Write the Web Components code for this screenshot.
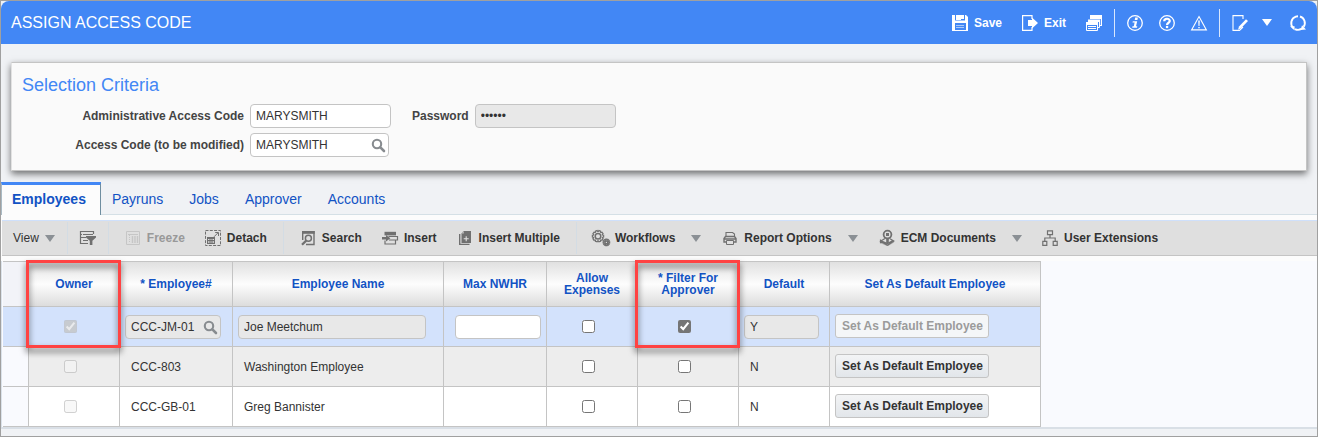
<!DOCTYPE html>
<html lang="en">
<head>
<meta charset="utf-8">
<title>Assign Access Code</title>
<style>
  html, body { margin: 0; }
  body { font: 12px/16px "Liberation Sans", Arial, sans-serif; color: #333; background: #f0f2f5; }
</style>
</head>
<body>
<app-window>
  <app-header slot="header" heading="ASSIGN ACCESS CODE"></app-header>
  <criteria-panel heading="Selection Criteria"></criteria-panel>
  <tab-bar tabs="Employees,Payruns,Jobs,Approver,Accounts"></tab-bar>
  <grid-toolbar></grid-toolbar>
  <employee-grid></employee-grid>
</app-window>

<script>
const define = (name, html, setup) => {
  const template = document.createElement('template');
  customElements.define(name, class extends HTMLElement {
    connectedCallback() {
      if (this.shadowRoot) return;
      const root = this.attachShadow({ mode: 'open' });
      template.innerHTML = `<style>*{box-sizing:border-box}[hidden]{display:none}</style>` +
        (typeof html === 'function' ? html(this) : html);
      root.append(template.content.cloneNode(true));
      if (setup) setup(root, this);
    }
  });
};

/* ---------- icons (16 unit grid) ---------- */
const S = 'fill="none" stroke="currentColor"';
const F = 'fill="currentColor"';
const gear = (cx, cy, r, teeth, inner) => {
  let d = '';
  for (let i = 0; i < teeth; i++) {
    const a = i * 2 * Math.PI / teeth, w = Math.PI / teeth / 2;
    const p = (rad, ang) => `${(cx + rad * Math.cos(ang)).toFixed(2)} ${(cy + rad * Math.sin(ang)).toFixed(2)}`;
    d += `${i ? 'L' : 'M'}${p(r - 1, a - w * 1.6)}L${p(r, a - w)}L${p(r, a + w)}L${p(r - 1, a + w * 1.6)}`;
  }
  return `<path d="${d}Z" ${S} stroke-width="1.2"/><circle cx="${cx}" cy="${cy}" r="${inner}" ${S} stroke-width="1.5"/>`;
};
const icons = {
  save: `<path ${F} fill-rule="evenodd" d="M0 0H14L16 2V16H0ZM3 0V5.4H13V0H12V4H9V0ZM3 8V15H14V8Z"/><path ${F} d="M4 0H9V5H4ZM10 1H12V4H10Z"/><path stroke="currentColor" d="M4 10.5H12M4 12.5H12" opacity=".55"/>`,
  exit: `<path ${S} stroke-width="1.2" d="M10 4V.6H.6V15.4H10V12"/><path ${F} d="M6 5H10V2.4L16 8L10 13.6V11H6Z"/>`,
  windows: `<path ${F} d="M4 0H16V4H4ZM14.8 3H16V11H13V10H14.8ZM2 4.6H14V7H2ZM0 7H12V10H0Z"/><path ${S} d="M.5 8V15.5H11.5V8M2 11.5H10M2 13.5H10"/><path ${S} d="M13.5 5V12.5H12"/>`,
  info: `<circle cx="8" cy="8" r="7.3" ${S} stroke-width="1.3"/><path ${F} d="M8.2 2.6H10.9L10.4 5H7.7ZM5.8 6.2H10.2L9 11.2H10.3L10 12.8H5.2L5.5 11.2H6.8L7.6 7.6H5.5Z"/>`,
  help: `<circle cx="8" cy="8" r="7.3" ${S} stroke-width="1.3"/><path ${S} stroke-width="2.2" d="M5.2 6.3C5.2 3 10.8 2.9 10.8 6C10.8 7.8 8 7.7 8 10"/><path ${F} d="M6.9 10.9H9.2V13.1H6.9Z"/>`,
  warn: `<path ${S} stroke-width="1.1" d="M8 1.6L15.4 14.9H.6Z"/><path ${F} d="M7.2 5.5H8.8L8.5 11H7.5ZM7.3 12H8.7V13.3H7.3Z"/>`,
  edit: `<path ${S} stroke-width="1.1" d="M11 4V.6H1V15.4H7.5L11 12"/><path ${F} d="M14 4.2L16 5.9L9 13.2L6 14.8L7 11.6Z"/>`,
  refresh: `<path ${S} stroke-width="1.9" d="M3.2 12.8A6.8 6.8 0 0 1 5.8 1.6A6.8 6.8 0 0 1 8 1.2M10 1.5A6.8 6.8 0 0 1 13.6 11.9M11.4 13.9A6.8 6.8 0 0 1 5 14.1"/><path ${F} d="M0 11.2H4.6V15.4ZM16 14.4L10.6 14.9L12 10.2Z"/>`,
  search: `<circle cx="6" cy="6" r="4.2" ${S} stroke-width="2.1"/><path stroke="currentColor" stroke-width="2.6" stroke-linecap="round" d="M9.6 9.6L13 13"/>`,
  filter: `<path ${S} stroke-width="1.2" d="M.5 1.5H13.5V4M.5 1V13.5H8M3 4.5H13M.5 7.5H6M3 10.5H8M0 4.5H2"/><path ${F} d="M6 6H16V7.5L12.4 10.8V15H9.8V10.8L6 7.5Z"/>`,
  freeze: `<path ${S} d="M1.5 1.5H14.5V14.5H1.5ZM3 4.5H13"/><path ${S} stroke-width="1.4" d="M7.5 6V13M10 6V13M12.5 6V13"/><path ${S} stroke-dasharray="1 1" d="M4.5 5V13"/>`,
  detach: `<path ${S} stroke-dasharray="3 1.3" d="M.5 .5H15.5V15.5H.5Z"/><path ${F} fill-rule="evenodd" d="M2 7H10V14H2ZM3 9V10H4.5V9ZM5.5 9V10H6.5V9ZM7.5 9V10H9V9ZM3 11.3V12.8H4.5V11.3ZM5.5 11.3V12.8H6.5V11.3ZM7.5 11.3V12.8H9V11.3Z"/><path ${S} d="M9 6.8L13 2.8M10.2 2.5H13.5V6"/>`,
  find: `<path ${S} stroke-width="1.4" d="M2.7 10V1.7H14V14.5H6"/><path ${F} d="M2 1H14.7V3.8H2Z"/><circle cx="8.4" cy="8.2" r="3" ${S} stroke-width="1.5"/><path stroke="currentColor" stroke-width="2.2" d="M6.2 10.6L2 14.8"/>`,
  insert: `<path ${F} d="M2.5 1.8H14V5.4H2.5Z"/><path ${S} stroke-width="1.2" d="M6.5 6.5H15.5V10H7M3 10.5V14H13.5V10.5"/><path ${F} d="M0 7H4V5L8.4 8.3L4 11.6V9.6H0Z"/>`,
  multiple: `<path ${F} d="M6.5 1H14V13H4.5V3.4Z"/><path ${S} stroke-width="1.4" d="M2.7 4V14.4H12.5"/><path stroke="#dfdfdf" stroke-width="1.1" d="M9.2 6.2V11.2M6.7 8.7H11.7"/><path fill="#dfdfdf" d="M4.5 3.6L6.8 1V3.6Z" opacity=".7"/>`,
  flows: gear(5, 6.2, 5.7, 10, 2.8) + gear(13.4, 12.4, 3.3, 8, 1.4),
  print: `<path ${S} stroke-width="1.1" d="M4 6V2.5H10.5L12.5 4V6"/><path ${S} stroke-width="1.4" d="M4 12H2V8.5L3.5 6.5H12.5L14 8.5V12H12M2 9H14"/><path ${S} d="M4.5 10.5H11.5V14.5H4.5Z"/>`,
  ecm: `<path ${S} stroke-width="1.2" d="M6 8.5L1.5 11.3L8.5 15.3L14.8 11L11 8.8M1.5 9.4V13.2M3 11.4L8.5 13.5L13.5 10.8"/><path ${F} d="M1 10L8 13V16L1 13ZM9 14L15 10.5V12.5L9 16Z" opacity=".45"/><circle cx="8.5" cy="4.6" r="3.9" fill="#dfdfdf" stroke="currentColor" stroke-width="1.8"/><path ${F} d="M7.2 8H9.8V13H7.2ZM7 3H10V6H7Z"/>`,
  tree: `<path ${S} stroke-width="1.2" d="M5.5 .8H10.5V4.6H5.5ZM.8 11.3H4.8V15.3H.8ZM11.2 11.3H15.2V15.3H11.2ZM8 4.6V8M2.8 11V8H13.2V11"/>`,
};
define('ui-icon', el => `<style>
  :host { display: block; flex: none; width: 16px; height: 16px; }
  svg { display: block; width: 100%; height: 100%; overflow: visible; }
</style><svg viewBox="0 0 16 16" aria-hidden="true">${icons[el.getAttribute('name')]}</svg>`);

define('ui-caret', `<style>
  :host { display: block; flex: none; }
  i { display: block; border: solid transparent; border-width: 7px 5px 0; border-top-color: currentColor; }
</style><i></i>`);

/* ---------- push button: icon + slotted label ---------- */
define('tool-button', el => `<style>
  :host { display: block; }
  button { display: flex; align-items: center; gap: 6px; height: 24px; margin: 0; padding: 0; border: 0;
    background: none; color: inherit; font: inherit; white-space: nowrap; }
  ui-icon { color: var(--icon-color, currentColor); }
  :host([disabled]) { color: #999; --icon-color: #c6c6c6; }
</style><button type="button" ${el.hasAttribute('disabled') ? 'disabled' : ''}
  ${el.getAttribute('label') ? `aria-label="${el.getAttribute('label')}"` : ''}>${
  el.getAttribute('icon') ? `<ui-icon name="${el.getAttribute('icon')}"></ui-icon>` : ''}<slot></slot></button>`);

define('app-window', `<style>
  :host { display: block; min-height: 100vh; box-sizing: border-box; border: 1px solid #a0a0a0; background: #f0f2f5; }
</style><slot name="header"></slot><main><slot></slot></main>`);

define('app-header', el => `<style>
  :host { display: flex; align-items: center; justify-content: space-between; height: 43px; padding: 0 11px 0 10px;
    box-sizing: border-box; background: #4287f5; color: #fff; border-radius: 8px 8px 0 0; }
  h1 { margin: 0; font-size: 16px; font-weight: 400; line-height: 20px; }
  nav, div { display: flex; align-items: center; }
  nav { gap: 12px; font-weight: 700; }
  div { gap: 16px; }
  .main { gap: 20px; }
  .edit { gap: 14px; }
  .edit tool-button:last-child { margin-left: 4px; }
  hr { width: 1px; height: 28px; margin: 0; border: 0; background: #d9e7fd; }
</style>
<h1>${el.getAttribute('heading')}</h1>
<nav>
  <div class="main">
    <tool-button icon="save">Save</tool-button>
    <tool-button icon="exit">Exit</tool-button>
    <tool-button icon="windows" label="Windows"></tool-button>
  </div><hr>
  <div>
    <tool-button icon="info" label="Information"></tool-button>
    <tool-button icon="help" label="Help"></tool-button>
    <tool-button icon="warn" label="Warnings"></tool-button>
  </div><hr>
  <div class="edit">
    <tool-button icon="edit" label="Edit"></tool-button>
    <tool-button label="Edit menu"><ui-caret></ui-caret></tool-button>
    <tool-button icon="refresh" label="Refresh"></tool-button>
  </div>
</nav>`);

const fieldStyles = `
  input:not([type=checkbox]) { display: block; width: 100%; height: 24px; margin: 0; padding: 0 5px; font: inherit;
    color: #333; background: #fff; border: 1px solid #c4c4c4; border-radius: 4px; }
  input:disabled:not([type=checkbox]) { background: #e8e8e8; }
  .lookup { position: relative; }
  .lookup button { position: absolute; right: 2px; top: 5px; display: block; padding: 0; border: 0; background: none; color: #888c90; }
`;

define('criteria-panel', el => `<style>
  :host { display: block; margin: 18px 10px 11px; padding: 12px 10px 13px; box-sizing: border-box;
    background: #fafafa; border: 1px solid #c4c4c4; border-left-color: #e2e2e2;
    box-shadow: 0 3px 7px rgba(0, 0, 0, .55); }
  h2 { margin: 0 0 9px; font-size: 18px; line-height: 20px; font-weight: 400; color: #4287f5; }
  form { display: grid; grid-template-columns: 222px 141px auto 141px; justify-content: start;
    align-items: center; gap: 5px 6px; }
  label { font-weight: 700; text-align: right; color: #444; }
  .second { padding-left: 15px; }
  .lookup { width: 139px; }
  ${fieldStyles}
</style>
<h2>${el.getAttribute('heading')}</h2>
<form>
  <label for="admin">Administrative Access Code</label>
  <input id="admin" value="MARYSMITH">
  <label for="password" class="second">Password</label>
  <input id="password" type="password" value="secret" disabled>
  <label for="code">Access Code (to be modified)</label>
  <div class="lookup"><input id="code" value="MARYSMITH">
    <button type="button" aria-label="Look up"><ui-icon name="search"></ui-icon></button></div>
</form>`);

define('tab-bar', el => `<style>
  :host { display: block; }
  div { display: flex; height: 33px; border-bottom: 1px solid #d5e0e6; }
  button { height: 33px; margin: 0; padding: 3px 15px 2px 11px; border: 0; background: none; font: inherit; font-size: 14px; color: #1253c4; }
  button[aria-selected=true] { padding: 0 14px 2px 10px; border: 1px solid #6f8ea0; border-top: 3px solid #4287f5; border-bottom: 0;
    border-left-color: #a9bac4; background: #fcfcfc; font-weight: 700; }
</style><div role="tablist">${el.getAttribute('tabs').split(',').map((t, i) =>
  `<button type="button" role="tab" aria-selected="${!i}">${t}</button>`).join('')}</div>`);

define('grid-toolbar', `<style>
  :host { display: block; padding: 5px 0 5px 1px; background: #fcfcfc; }
  div { display: flex; align-items: center; }
  .bar { height: 36px; gap: 16px; padding-left: 11px; background: #dfdfdf; border-top: 1px solid #cfe0fb;
    border-bottom: 1px solid #c4c4c4; font-weight: 700; --icon-color: #707070; }
  .view { gap: 12px; font-weight: 400; }
  .menu { gap: 16px; }
  ui-caret { color: #8b9095; }
  hr { flex: none; width: 1px; height: 32px; margin: 0; border: 0; background: #d3dce4; }
  tool-button + tool-button, .menu + tool-button { margin-left: 4px; }
  .menu + .menu { margin-left: 5px; }
</style>
<div class="bar" role="toolbar">
  <div class="view"><tool-button>View<ui-caret></ui-caret></tool-button><hr>
    <tool-button icon="filter" label="Query by example"></tool-button><hr></div>
  <tool-button icon="freeze" disabled>Freeze</tool-button>
  <tool-button icon="detach">Detach</tool-button><hr>
  <tool-button icon="find">Search</tool-button>
  <tool-button icon="insert">Insert</tool-button>
  <tool-button icon="multiple">Insert Multiple</tool-button><hr>
  <div class="menu"><tool-button icon="flows">Workflows</tool-button><ui-caret></ui-caret></div>
  <div class="menu"><tool-button icon="print">Report Options</tool-button><ui-caret></ui-caret></div>
  <div class="menu"><tool-button icon="ecm">ECM Documents</tool-button><ui-caret></ui-caret></div>
  <tool-button icon="tree">User Extensions</tool-button>
</div>`);

const rows = [
  { id: 'CCC-JM-01', name: 'Joe Meetchum', def: 'Y', selected: true },
  { id: 'CCC-803', name: 'Washington Employee', def: 'N' },
  { id: 'CCC-GB-01', name: 'Greg Bannister', def: 'N' },
];
const check = (label, on, off) =>
  `<td class="check"><input type="checkbox" aria-label="${label}"${on ? ' checked' : ''}${off ? ' disabled' : ''}></td>`;
const rowHtml = r => `<tr${r.selected ? ' class="selected"' : ''}><td></td>${check('Owner', r.selected, true)}` +
  (r.selected ? `
    <td class="edit"><div class="lookup"><input aria-label="Employee#" value="${r.id}" disabled>
      <button type="button" aria-label="Look up"><ui-icon name="search"></ui-icon></button></div></td>
    <td class="edit name"><input aria-label="Employee Name" value="${r.name}" disabled></td>
    <td class="edit max"><input aria-label="Max NWHR"></td>` :
    `<td>${r.id}</td><td>${r.name}</td><td></td>`) +
  check('Allow Expenses') + check('Filter For Approver', r.selected) +
  (r.selected ? `<td class="edit default"><input aria-label="Default" value="${r.def}" disabled></td>` : `<td>${r.def}</td>`) +
  `<td class="action"><button type="button"${r.selected ? ' disabled' : ''}>Set As Default Employee</button></td></tr>`;

define('employee-grid', `<style>
  :host { display: block; padding-left: 2px; border-bottom: 2px solid #d9dfe6; background: #f9fafe;
    box-shadow: inset 1px 0 #dbe2ea; }
  table { table-layout: fixed; width: 1038px; border-spacing: 0; border-top: 1px solid #c4c4c4; }
  th, td { border: 1px solid #c4c4c4; border-width: 0 1px 1px 0; }
  th { position: relative; height: 45px; padding: 0 6px; font-size: 12px; line-height: 12px; color: #1253c4;
    background: linear-gradient(#e0e0e0, #fdfdfd 50%, #dcdcdc); }
  td { height: 40px; padding: 0 11px; background: #fff; }
  tr:nth-child(2) td { background: #ededed; }
  thead th:first-child { background: #f2f3f8; }
  tbody td:first-child { background: #f9fafe; }
  .selected td, tbody .selected td:first-child { background: #d3e2fc; }
  .check { padding: 0 8px 0 0; text-align: center; }
  .check input { display: block; width: 13px; height: 13px; margin: 0 auto; accent-color: #757575; }
  td.edit { padding: 0 11px 0 5px; }
  td.name { padding-right: 17px; }
  td.max { padding: 0 5px 0 11px; }
  td.default { padding-right: 10px; }
  .action { padding: 0 5px 2px; }
  .action button { display: block; height: 24px; padding: 0 5px 0 6px; font: inherit; font-weight: 700; color: #333; white-space: nowrap;
    border: 1px solid #c4c4c4; border-radius: 3px; background: linear-gradient(#f3f4f5, #e2e6ea); }
  .action button:disabled { color: #9b9b9b; background: #f4f6f8; }
  .mark { position: absolute; z-index: 1; top: -2px; left: -3px; right: -2px; height: 88px; border: 3px solid #ff4343;
    filter: drop-shadow(0 4px 3px rgba(0, 0, 0, .6)); pointer-events: none; }
  ${fieldStyles}
</style>
<table>
  <colgroup><col style="width:26px"><col style="width:91px"><col style="width:113px"><col style="width:211px"><col style="width:103px">
    <col style="width:91px"><col style="width:101px"><col style="width:91px"><col style="width:211px"></colgroup>
  <thead><tr><th></th><th>Owner<span class="mark"></span></th><th>* Employee#</th><th>Employee Name</th><th>Max NWHR</th>
    <th>Allow Expenses</th><th>* Filter For Approver<span class="mark"></span></th><th>Default</th><th>Set As Default Employee</th></tr></thead>
  <tbody>${rows.map(rowHtml).join('')}</tbody>
</table>`);
</script>
</body>
</html>
